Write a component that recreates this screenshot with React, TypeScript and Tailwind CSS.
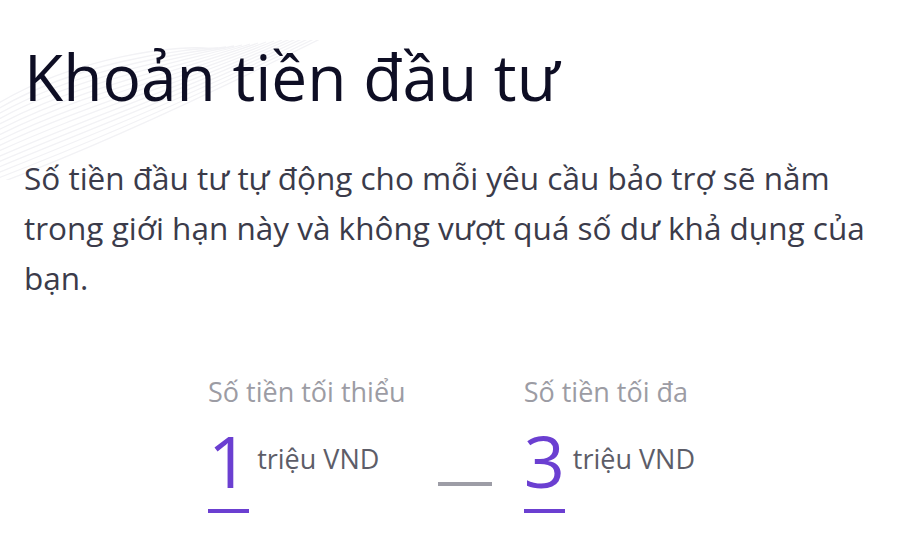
import React from 'react';

const Waves: React.FC = () => (
    <svg
        className="absolute left-0 top-[40px] pointer-events-none"
        width="340"
        height="140"
        viewBox="0 0 340 140"
        fill="none"
    >
        {Array.from({ length: 16 }).map((_, i) => (
            <path
                key={i}
                d={`M -20 ${150 - i * 5} C 70 ${118 - i * 7}, 190 ${64 - i * 4}, ${330 - i * 8} ${-6 + i}`}
                stroke="#f2f2f5"
                strokeWidth="1.3"
            />
        ))}
    </svg>
);

interface AmountProps {
    label: string;
    value: string;
}

const Amount: React.FC<AmountProps> = ({ label, value }) => (
    <div className="flex flex-col">
        <span className="text-[27px] leading-[32px] text-[#9c9ca4]">{label}</span>
        <div className="flex items-start mt-[16px]">
            <span className="text-[72px] leading-[72px] text-[#6b3fd1] border-b-[4px] border-[#6b3fd1] pb-[13px]">
                {value}
            </span>
            <span className="ml-[8px] mt-[19px] text-[27px] leading-[32px] text-[#5d5d68]">triệu VND</span>
        </div>
    </div>
);

export default function App() {
    return (
        <div
            className="relative w-[903px] h-[552px] bg-white overflow-hidden"
            style={{ fontFamily: '"Open Sans", "Noto Sans", sans-serif' }}
        >
            <Waves />
            <div className="relative pl-[24px] pt-[38px]">
                <h1 className="text-[64px] leading-[77px] text-[#0e0e24] font-normal">Khoản tiền đầu tư</h1>
                <p className="mt-[38px] w-[860px] text-[31.5px] leading-[50px] text-[#3b3b4a]">
                    Số tiền đầu tư tự động cho mỗi yêu cầu bảo trợ sẽ nằm trong giới hạn này và không vượt quá số dư khả dụng của bạn.
                </p>
                <div className="flex justify-center items-start gap-8 mt-[73px] pr-[24px]">
                    <Amount label="Số tiền tối thiểu" value="1" />
                    <div className="w-[54px] h-[4px] bg-[#9d9da6] mt-[106px]" />
                    <Amount label="Số tiền tối đa" value="3" />
                </div>
            </div>
        </div>
    );
}
